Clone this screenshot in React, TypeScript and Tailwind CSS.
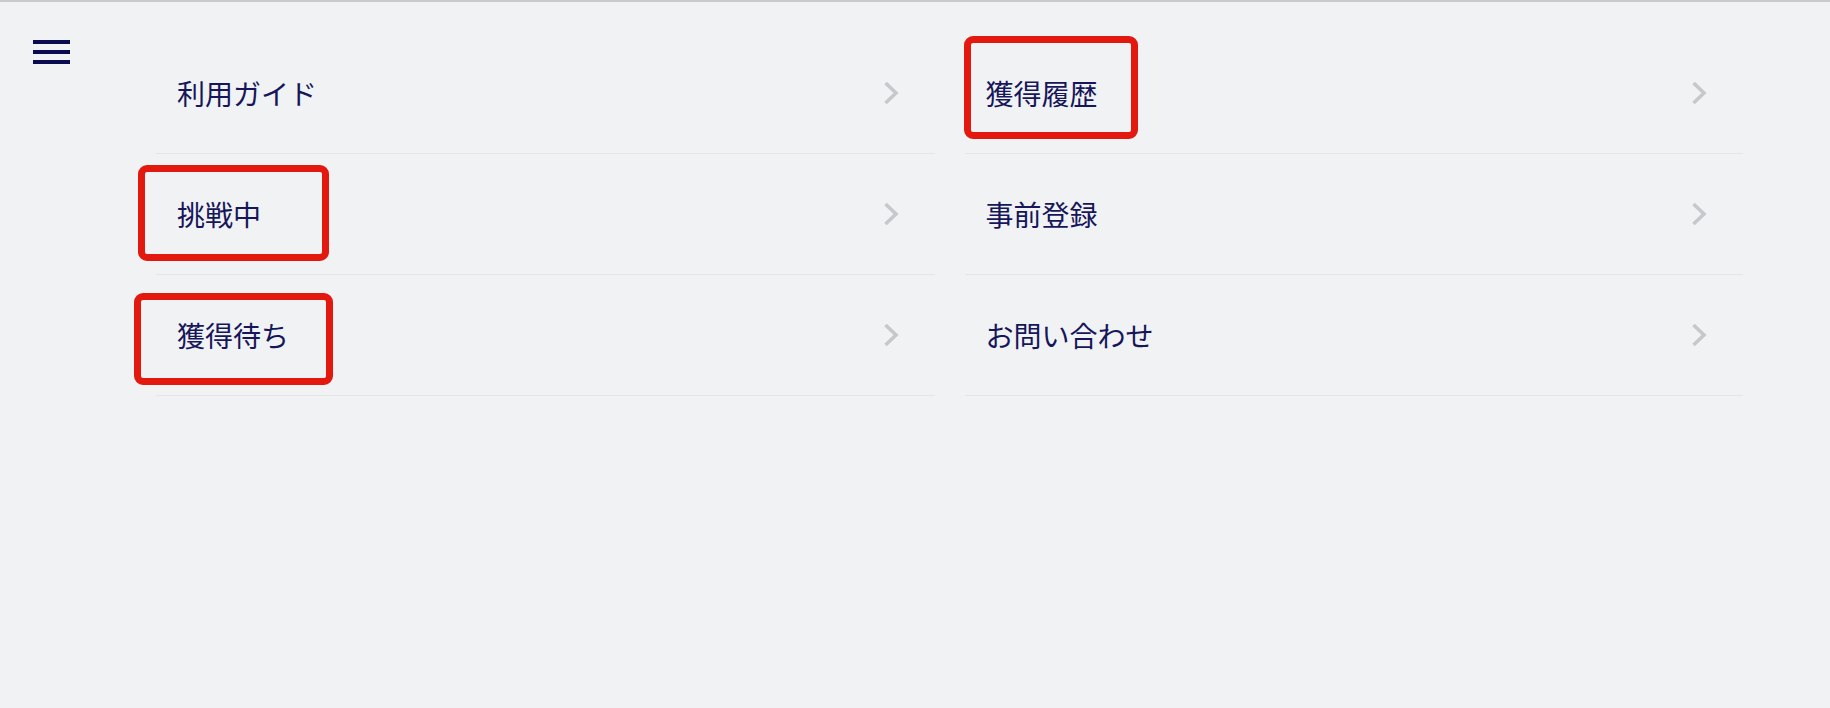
import React from "react"

interface MenuItem {
  label: string
  marked?: string
}

const LEFT: MenuItem[] = [
  { label: "利用ガイド" },
  { label: "挑戦中", marked: "left-[-18px] top-[11px] w-[191px] h-[96px]" },
  { label: "獲得待ち", marked: "left-[-22px] top-[18px] w-[199px] h-[92px]" },
]

const RIGHT: MenuItem[] = [
  { label: "獲得履歴", marked: "left-[-1px] top-[3px] w-[174px] h-[103px]" },
  { label: "事前登録" },
  { label: "お問い合わせ" },
]

function Chevron() {
  return (
    <svg width="16" height="24" viewBox="0 0 16 24" fill="none" className="shrink-0">
      <path d="M2.5 2 L13 12 L2.5 22" stroke="#c6c9cc" strokeWidth="3.6" strokeLinejoin="miter" />
    </svg>
  )
}

function Row({ item }: { item: MenuItem }) {
  return (
    <div className="relative flex h-[121px] items-center justify-between border-b border-[#e4e5e8] pl-[21px] pr-[36px]">
      <span className="text-[28px] leading-none text-[#16165a]">{item.label}</span>
      <Chevron />
      {/* red annotation frame from the screenshot */}
      {item.marked && (
        <div className={`absolute rounded-[9px] border-[7px] border-[#e3190f] ${item.marked}`} />
      )}
    </div>
  )
}

export default function App() {
  return (
    <div
      className="h-[708px] w-full border-t-2 border-[#c9cacd] bg-[#f1f2f4]"
      style={{ fontFamily: '"Noto Sans CJK JP", "Noto Sans", sans-serif' }}
    >
      <div className="flex pt-[31px]">
        {/* hamburger */}
        <div className="ml-[33px] mt-[7px] flex w-[37px] flex-col gap-[6px]">
          <div className="h-[4px] bg-[#0b0b52]" />
          <div className="h-[4px] bg-[#0b0b52]" />
          <div className="h-[4px] bg-[#0b0b52]" />
        </div>

        <div className="ml-[86px] grid w-[1587px] grid-cols-2 gap-x-[30px]">
          <div className="flex flex-col">
            {LEFT.map((item) => (
              <Row key={item.label} item={item} />
            ))}
          </div>
          <div className="flex flex-col">
            {RIGHT.map((item) => (
              <Row key={item.label} item={item} />
            ))}
          </div>
        </div>
      </div>
    </div>
  )
}
